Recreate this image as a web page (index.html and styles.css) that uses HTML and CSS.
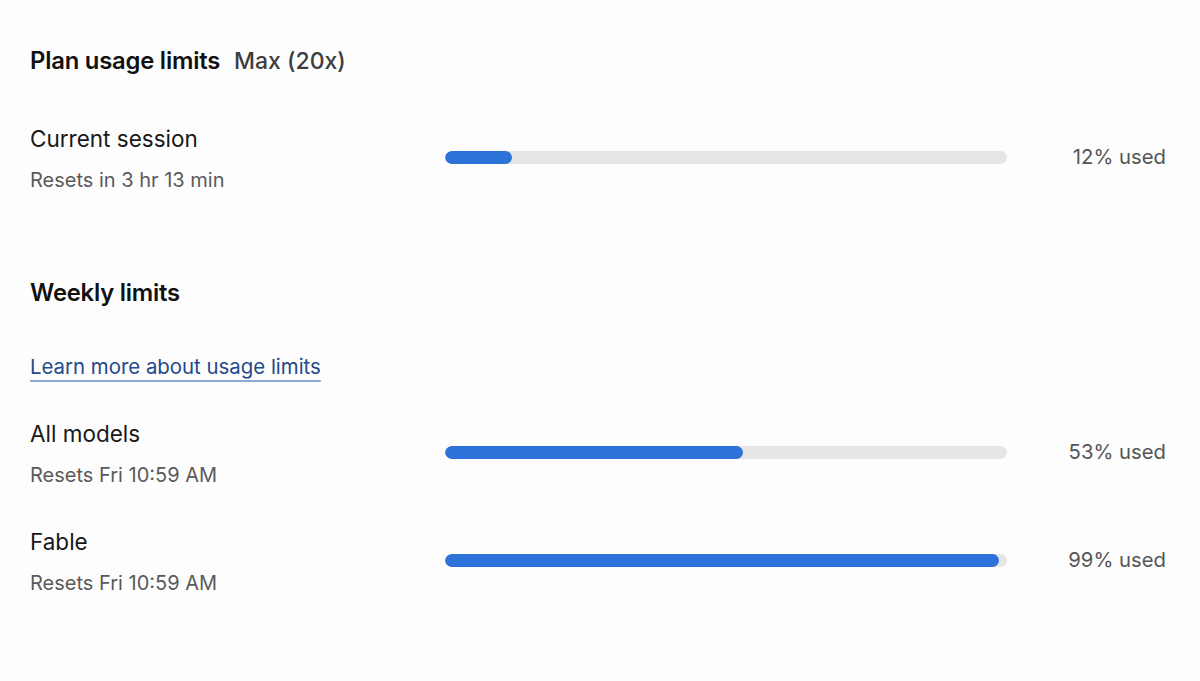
FILE: index.html
```html
<!DOCTYPE html>
<html lang="en">
<head>
    <meta charset="UTF-8">
    <meta name="viewport" content="width=device-width, initial-scale=1.0">
    <title>Usage</title>
    <link rel="stylesheet" href="styles.css">
</head>
<body>
    <div class="usage-page">
        <div class="section-header">
            <h2>Plan usage limits</h2>
            <span class="plan-name">Max (20x)</span>
        </div>

        <div class="limit-row session-row">
            <div class="limit-info">
                <div class="limit-title">Current session</div>
                <div class="limit-reset">Resets in 3 hr 13 min</div>
            </div>
            <div class="bar-track"><div class="bar-fill" style="width: 12%"></div></div>
            <div class="limit-used">12% used</div>
        </div>

        <div class="section-header weekly-header">
            <h2>Weekly limits</h2>
        </div>

        <a class="learn-link" href="#">Learn more about usage limits</a>

        <div class="limit-row">
            <div class="limit-info">
                <div class="limit-title">All models</div>
                <div class="limit-reset">Resets Fri 10:59 AM</div>
            </div>
            <div class="bar-track"><div class="bar-fill" style="width: 53%"></div></div>
            <div class="limit-used">53% used</div>
        </div>

        <div class="limit-row">
            <div class="limit-info">
                <div class="limit-title">Fable</div>
                <div class="limit-reset">Resets Fri 10:59 AM</div>
            </div>
            <div class="bar-track"><div class="bar-fill" style="width: 98.6%"></div></div>
            <div class="limit-used">99% used</div>
        </div>
    </div>
</body>
</html>
```

FILE: styles.css
```css
* {
    margin: 0;
    padding: 0;
    box-sizing: border-box;
    font-family: Inter, 'Noto Sans', sans-serif;
}

body {
    background: #fdfdfd;
    color: #161616;
}

.usage-page {
    padding: 46px 34px 0 30px;
}

.section-header {
    display: flex;
    align-items: baseline;
    gap: 14px;
}

.section-header h2 {
    font-size: 23.8px;
    font-weight: 600;
    letter-spacing: -0.2px;
    line-height: 30px;
    color: #111;
}

.plan-name {
    font-size: 23px;
    font-weight: 500;
    color: #3d3d3d;
}

.limit-row {
    display: grid;
    grid-template-columns: 415px 562px 1fr;
    align-items: center;
    margin-top: 42px;
}

.session-row {
    margin-top: 50px;
}

.limit-title {
    font-size: 22.5px;
    line-height: 26px;
    color: #181818;
}

.limit-reset {
    font-size: 20px;
    line-height: 24px;
    margin-top: 16px;
    color: #5a5a5a;
}

.bar-track {
    height: 13px;
    background: #e6e6e6;
    border-radius: 7px;
    overflow: hidden;
    margin-bottom: 3px;
}

.bar-fill {
    height: 100%;
    background: #2c72d9;
    border-radius: 7px;
}

.limit-used {
    text-align: right;
    font-size: 20.3px;
    color: #555;
    margin-bottom: 5px;
}

.weekly-header {
    margin-top: 86px;
}

.learn-link {
    display: inline-block;
    margin-top: 46px;
    font-size: 20.4px;
    color: #24498c;
    text-decoration: underline;
    text-decoration-color: #8fa9d6;
    text-underline-offset: 6px;
    text-decoration-thickness: 1.5px;
}
```
